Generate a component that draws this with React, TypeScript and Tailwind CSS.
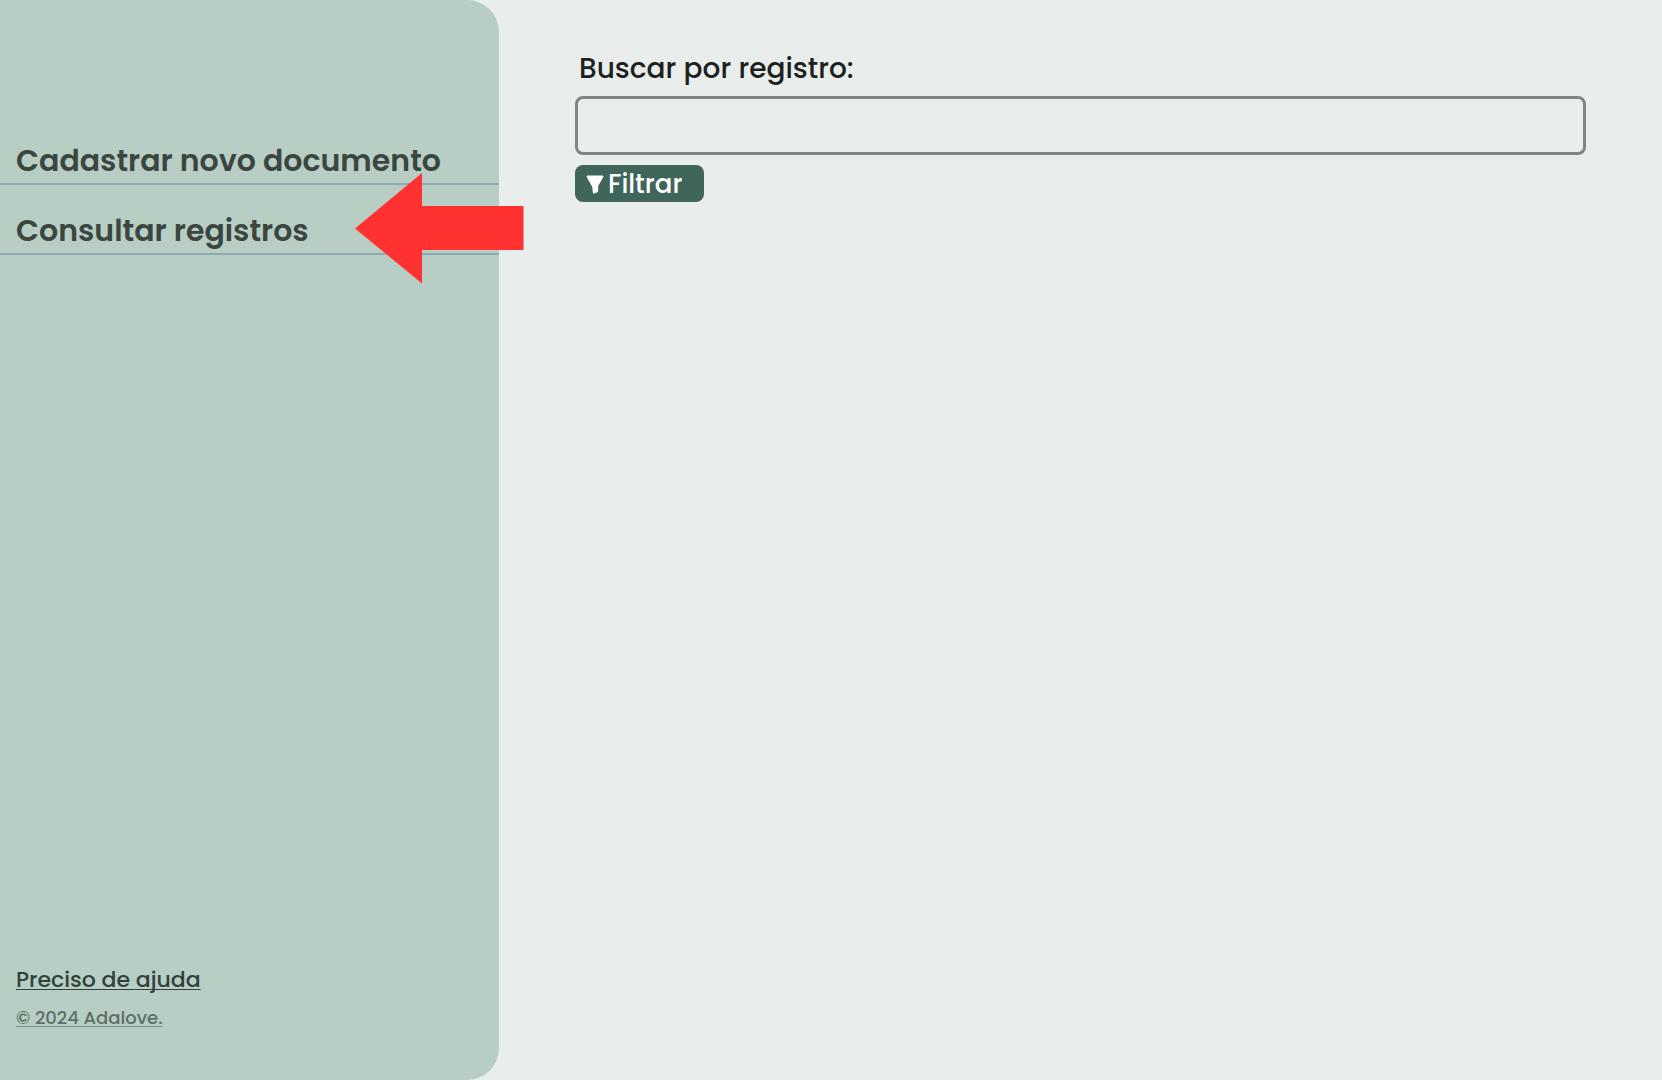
const navItems = ['Cadastrar novo documento', 'Consultar registros'];

function PointerArrow() {
  return (
    <svg
      className="pointer-events-none absolute top-[173px] left-[355px] h-[110px] w-[169px]"
      viewBox="0 0 169 110"
      fill="#ff3131"
      aria-hidden="true"
    >
      <path d="M0 55.500 67 0V33H168.500V77H67V110.500Z" />
    </svg>
  );
}

export default function App() {
  return (
    <div className="relative flex min-h-screen bg-[#e9eeec] font-['Poppins','Inter',sans-serif]">
      <aside className="flex w-[30%] min-w-[499px] shrink-0 flex-col justify-between rounded-r-[32px] bg-[#b8cdc4] pt-[115px] pb-[52px]">
        <nav>
          {navItems.map((item) => (
            <a
              key={item}
              href="#"
              className="flex h-[70px] items-end border-b-2 border-[#8fa9b3] px-4 text-[30px] leading-[44px] font-semibold whitespace-nowrap text-[#3b463f]"
            >
              {item}
            </a>
          ))}
        </nav>
        <footer className="flex flex-col items-start gap-4 px-4">
          <a
            href="#"
            className="text-[22px] leading-6 font-medium text-[#2f423c] underline decoration-1 underline-offset-2 [text-decoration-skip-ink:none]"
          >
            Preciso de ajuda
          </a>
          <a
            href="#"
            className="text-[18px] leading-5 font-medium text-[#5b7068] underline decoration-[#789087] decoration-1 underline-offset-2 [text-decoration-skip-ink:none]"
          >
            © 2024 Adalove.
          </a>
        </footer>
      </aside>
      <main className="flex min-w-0 flex-1 flex-col items-start px-[76px] pt-[49px]">
        <label htmlFor="registro" className="pl-1 text-[28px] leading-10 font-medium text-[#1d2220]">
          Buscar por registro:
        </label>
        <input
          id="registro"
          type="text"
          className="mt-[7px] h-[59px] w-full rounded-lg border-3 border-[#818582] bg-transparent px-4 text-[26px] outline-none"
        />
        <button
          type="button"
          className="mt-[10px] flex h-[37px] w-[129px] items-center gap-1 rounded-lg bg-[#40665c] pt-px pl-[11px] text-[26px] leading-9 font-medium text-white"
        >
          <svg className="h-[19px] w-[18px] shrink-0" viewBox="0 0 18 19" fill="currentColor" aria-hidden="true">
            <path d="M1.500 .5H16.500Q18 .5 17.300 2L12.200 11V15.500Q12.200 17 11 17.500L8.300 18.500Q7 18.800 6.800 17.500L6.300 12 .7 2Q0 .5 1.500 .5Z" />
          </svg>
          Filtrar
        </button>
      </main>
      <PointerArrow />
    </div>
  );
}
